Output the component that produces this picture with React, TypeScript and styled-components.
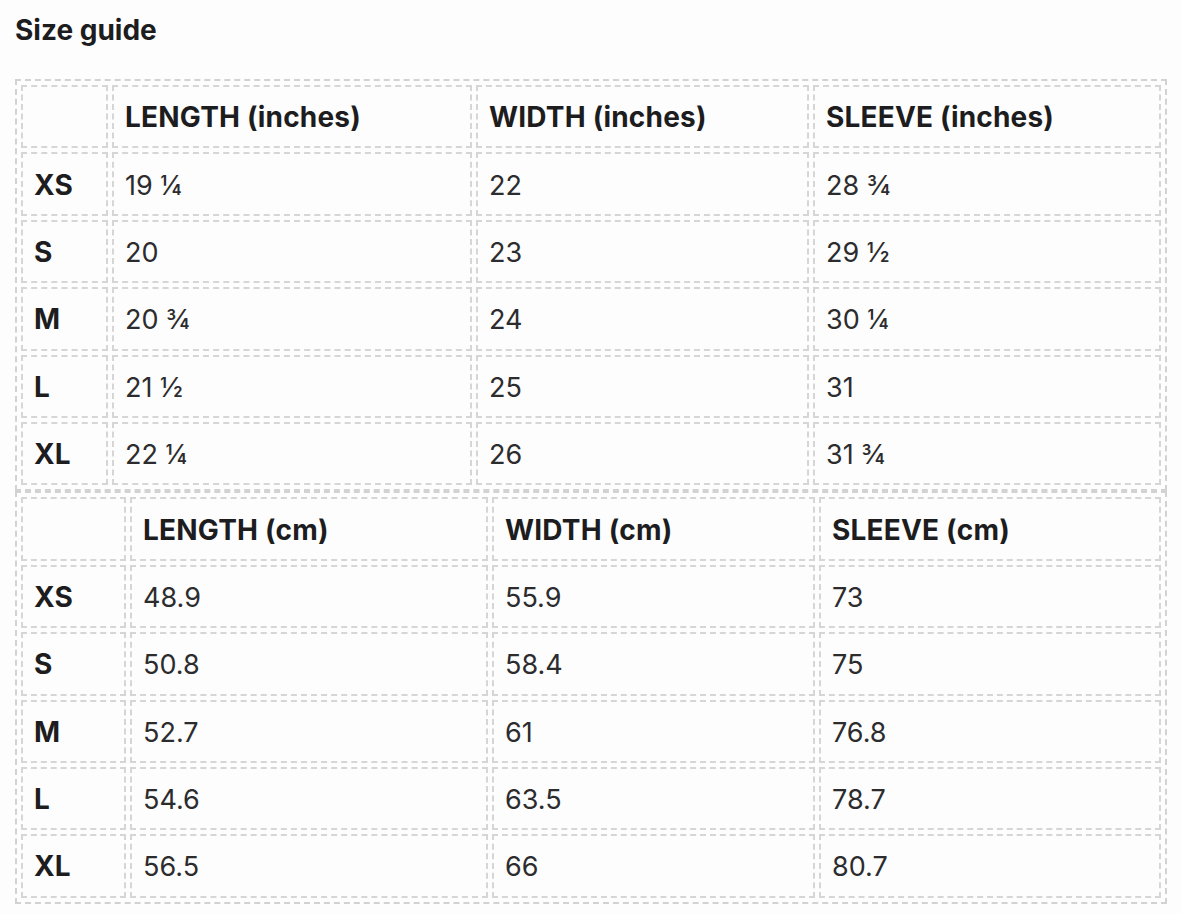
import React from "react";
import styled, { createGlobalStyle } from "styled-components";

const Global = createGlobalStyle`
  html, body { margin: 0; padding: 0; background: #fdfdfd; }
  body { font-family: Inter, "Noto Sans", sans-serif; color: #1d1d1f; }
`;

const Page = styled.div`
  padding: 12px 15px 12px 15px;
`;

const Title = styled.h2`
  margin: 0 0 31px 0;
  font-size: 28px;
  line-height: 36px;
  font-weight: 700;
  color: #1d1d1f;
`;

const Table = styled.table`
  width: 1152px;
  table-layout: fixed;
  border-collapse: separate;
  border-spacing: 4px;
  border: 2px dashed #d2d2d2;
`;

const Cell = styled.td<{ $w?: number; $bold?: boolean }>`
  box-sizing: border-box;
  width: ${(p) => (p.$w ? `${p.$w}px` : "auto")};
  height: 63.4px;
  padding: 2px 11px 0;
  border: 2px dashed #d6d6d6;
  font-size: ${(p) => (p.$bold ? 28 : 27)}px;
  letter-spacing: ${(p) => (p.$bold ? "0.2px" : "0")};
  line-height: 35px;
  font-weight: ${(p) => (p.$bold ? 700 : 400)};
  color: ${(p) => (p.$bold ? "#1d1d1f" : "#2c2c2e")};
  text-align: left;
  vertical-align: middle;
  white-space: nowrap;
`;

type SizeTable = {
  unit: string;
  widths: number[];
  rows: [string, string, string, string][];
};

const tables: SizeTable[] = [
  {
    unit: "inches",
    widths: [87, 360, 333],
    rows: [
      ["XS", "19 ¼", "22", "28 ¾"],
      ["S", "20", "23", "29 ½"],
      ["M", "20 ¾", "24", "30 ¼"],
      ["L", "21 ½", "25", "31"],
      ["XL", "22 ¼", "26", "31 ¾"],
    ],
  },
  {
    unit: "cm",
    widths: [105, 358, 323],
    rows: [
      ["XS", "48.9", "55.9", "73"],
      ["S", "50.8", "58.4", "75"],
      ["M", "52.7", "61", "76.8"],
      ["L", "54.6", "63.5", "78.7"],
      ["XL", "56.5", "66", "80.7"],
    ],
  },
];

function GuideTable({ t }: { t: SizeTable }) {
  return (
    <Table>
      <thead>
        <tr>
          <Cell as="th" $w={t.widths[0]} />
          <Cell as="th" $w={t.widths[1]} $bold>{`LENGTH (${t.unit})`}</Cell>
          <Cell as="th" $w={t.widths[2]} $bold>{`WIDTH (${t.unit})`}</Cell>
          <Cell as="th" $bold>{`SLEEVE (${t.unit})`}</Cell>
        </tr>
      </thead>
      <tbody>
        {t.rows.map((r) => (
          <tr key={r[0]}>
            <Cell as="th" $bold>{r[0]}</Cell>
            <Cell>{r[1]}</Cell>
            <Cell>{r[2]}</Cell>
            <Cell>{r[3]}</Cell>
          </tr>
        ))}
      </tbody>
    </Table>
  );
}

export default function App() {
  return (
    <Page>
      <Global />
      <Title>Size guide</Title>
      {tables.map((t) => (
        <GuideTable key={t.unit} t={t} />
      ))}
    </Page>
  );
}
